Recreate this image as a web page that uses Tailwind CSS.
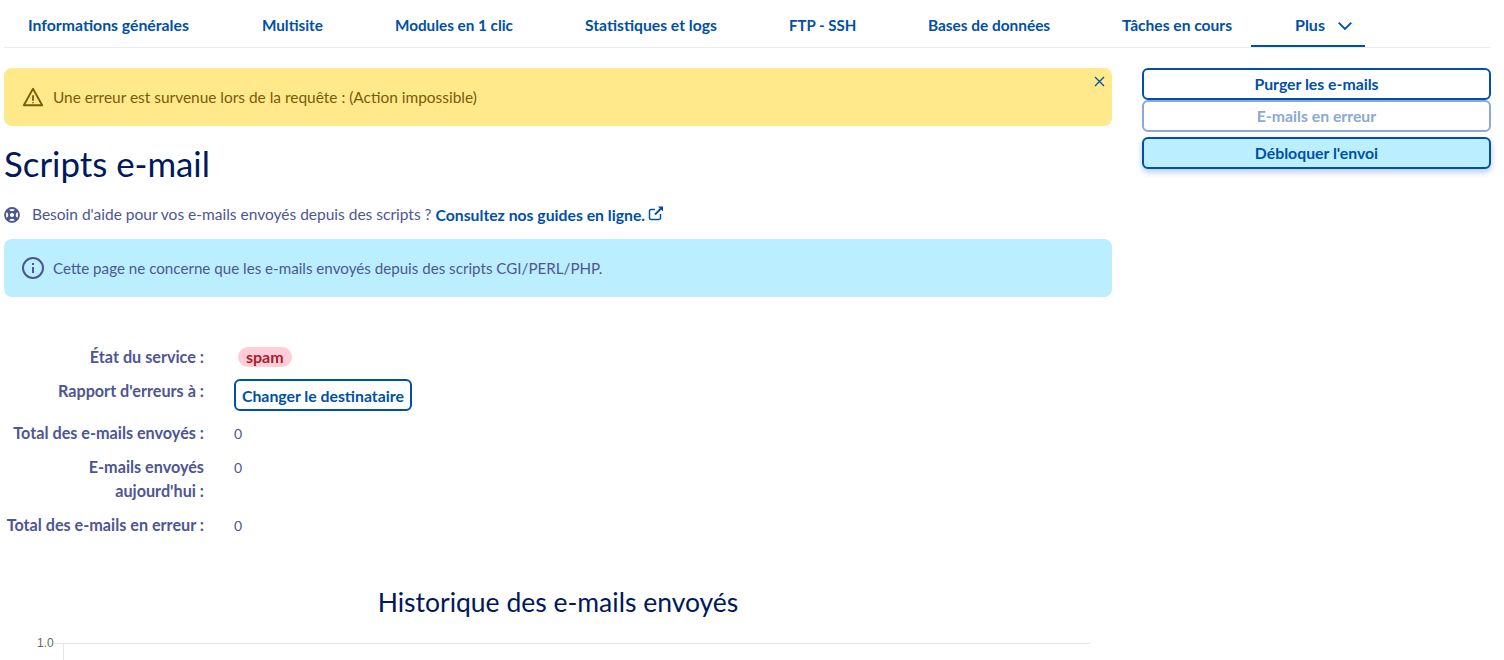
<!doctype html>
<html lang="fr">
<head>
<meta charset="utf-8">
<script src="https://cdn.jsdelivr.net/npm/@tailwindcss/browser@4"></script>
<title>Scripts e-mail</title>
</head>
<body class="bg-white h-[660px] overflow-hidden font-['Lato','Liberation_Sans',sans-serif] text-[15px] text-[#4d5693]">
<nav class="mx-1 w-[1486px] h-12 flex border-b border-[#e6eef3] text-[#0050a8] font-bold leading-5">
  <a class="ml-6 w-[162px] pt-[15px] whitespace-nowrap text-[15.8px]">Informations générales</a>
  <a class="ml-[72px] w-[61px] pt-[15px] whitespace-nowrap text-[15.25px]">Multisite</a>
  <a class="ml-[72px] w-[118px] pt-[15px] whitespace-nowrap text-[15.25px]">Modules en 1 clic</a>
  <a class="ml-[72px] w-[132px] pt-[15px] whitespace-nowrap text-[15.7px]">Statistiques et logs</a>
  <a class="ml-[72px] w-[67px] pt-[15px] whitespace-nowrap text-[15px]">FTP - SSH</a>
  <a class="ml-[72px] w-[122px] pt-[15px] whitespace-nowrap text-[15.4px]">Bases de données</a>
  <a class="ml-[72px] w-[110px] pt-[15px] whitespace-nowrap text-[15.6px]">Tâches en cours</a>
  <a class="ml-[19px] w-[114px] h-[47px] pl-11 pt-[15px] whitespace-nowrap border-b-2 border-[#0050a8] flex items-start gap-[13px] text-[16px]">
    <span>Plus</span>
    <svg class="w-[14px] h-[8px] mt-[7px]" viewBox="0 0 14 8" fill="none" stroke="#0050a8" stroke-width="1.8"><path d="M.7.7 7 7 13.3.7"/></svg>
  </a>
</nav>
<div class="flex mx-1 mt-5 gap-[30px]">
  <main class="w-[1108px]">
    <div class="relative h-[58px] rounded-lg bg-[#ffe98a] text-[#7a5a0a] flex items-center pl-[18px] gap-[9px]">
      <svg class="w-[22px] h-[22px]" viewBox="0 0 24 24" fill="none" stroke="#7a5a0a" stroke-width="2" stroke-linejoin="round"><path d="M12 3 2 21h20z"/><path d="M12 10v6M12 17.6v1.2"/></svg>
      <span class="text-[15.45px] mt-[2px]">Une erreur est survenue lors de la requête : (Action impossible)</span>
      <svg class="absolute right-[7px] top-[8px] w-[11px] h-[11px]" viewBox="0 0 11 11" stroke="#0050a8" stroke-width="1.3"><path d="M1 1l9 9M10 1l-9 9"/></svg>
    </div>
    <h1 class="mt-[18px] text-[34.8px] leading-[40px] text-[#00185e]">Scripts e-mail</h1>
    <p class="mt-[19px] h-6 flex items-center whitespace-nowrap">
      <svg class="w-4 h-4 mr-3" viewBox="0 0 16 16" fill="none" stroke="#4d5693"><circle cx="8" cy="8" r="7" stroke-width="1.8"/><circle cx="8" cy="8" r="3" stroke-width="1.8"/><path d="M3 3l3 3M13 3l-3 3M3 13l3-3M13 13l-3-3" stroke-width="3.4"/></svg>
      <span class="text-[15.5px]">Besoin d'aide pour vos e-mails envoyés depuis des scripts ?&nbsp;</span><a class="font-bold text-[#0050a8] text-[15.75px]">Consultez nos guides en ligne.</a>
      <svg class="w-4 h-4 ml-[3px] -mt-1" viewBox="0 0 16 16" fill="none" stroke="#0050a8" stroke-width="1.5"><path d="M12.5 9v4a1.5 1.5 0 0 1-1.5 1.5H3A1.5 1.5 0 0 1 1.5 13V6A1.5 1.5 0 0 1 3 4.5h4"/><path d="M7 9.5 14 2.5" stroke-width="2"/><path d="M10 1.5h5v5z" fill="#0050a8" stroke="none"/></svg>
    </p>
    <div class="mt-3 h-[58px] rounded-lg bg-[#bbefff] flex items-center pl-[18px] gap-[9px]">
      <svg class="w-[22px] h-[22px]" viewBox="0 0 22 22" fill="none" stroke="#4d5693" stroke-width="2"><circle cx="11" cy="11" r="10"/><path d="M11 10v6M11 6v2"/></svg>
      <span class="text-[15.16px]">Cette page ne concerne que les e-mails envoyés depuis des scripts CGI/PERL/PHP.</span>
    </div>
    <dl class="mt-12 grid grid-cols-[200px_1fr] gap-x-[30px] leading-6">
      <dt class="font-bold text-right h-[34px] text-[16.2px] whitespace-nowrap">État du service :</dt>
      <dd class="h-[34px]"><span class="ml-1 inline-block h-5 px-2 rounded-full bg-[#ffcdd7] text-[#a81c2c] font-bold leading-5 text-[16px]">spam</span></dd>
      <dt class="font-bold text-right text-[16.2px] whitespace-nowrap">Rapport d'erreurs à :</dt>
      <dd class="h-[42px]"><button class="h-8 px-[6px] pt-px rounded-md border-2 border-[#0050a8] text-[#0050a8] font-bold leading-none text-[15.8px]">Changer le destinataire</button></dd>
      <dt class="font-bold text-right h-[34px] text-[16.2px] whitespace-nowrap">Total des e-mails envoyés :</dt>
      <dd class="h-[34px] text-[14px] pt-px">0</dd>
      <dt class="font-bold text-right h-[58px] text-[16.2px] whitespace-nowrap">E-mails envoyés<br>aujourd'hui :</dt>
      <dd class="h-[58px] text-[14px] pt-px">0</dd>
      <dt class="font-bold text-right h-6 whitespace-nowrap text-[16.2px]">Total des e-mails en erreur :</dt>
      <dd class="h-6 text-[14px] pt-px">0</dd>
    </dl>
    <h2 class="mt-12 text-center text-[26.5px] leading-[34px] text-[#00185e]">Historique des e-mails envoyés</h2>
    <div class="mt-[18px] relative h-10">
      <span class="absolute left-[33px] -top-px text-[12px] leading-[14px] text-[#666] font-['Liberation_Sans',sans-serif]">1.0</span>
      <div class="absolute left-[50px] top-[6px] w-[1036px] border-t border-[#e6e6e6]"></div>
      <div class="absolute left-[59px] top-[6px] h-10 border-l border-[#e6e6e6]"></div>
    </div>
  </main>
  <aside class="w-[349px] flex flex-col font-bold leading-5 text-center text-[15.8px]">
    <button class="h-8 rounded-md border-2 border-[#0050a8] text-[#0050a8] font-bold">Purger les e-mails</button>
    <button class="h-8 rounded-md border-2 border-[#8ca8d4] text-[#8ca8d4] font-bold">E-mails en erreur</button>
    <button class="mt-[5px] h-8 rounded-md border-2 border-[#0050a8] bg-[#bbefff] text-[#0050a8] font-bold shadow-[0_3px_6px_rgba(0,80,168,0.3)]">Débloquer l'envoi</button>
  </aside>
</div>
</body>
</html>
